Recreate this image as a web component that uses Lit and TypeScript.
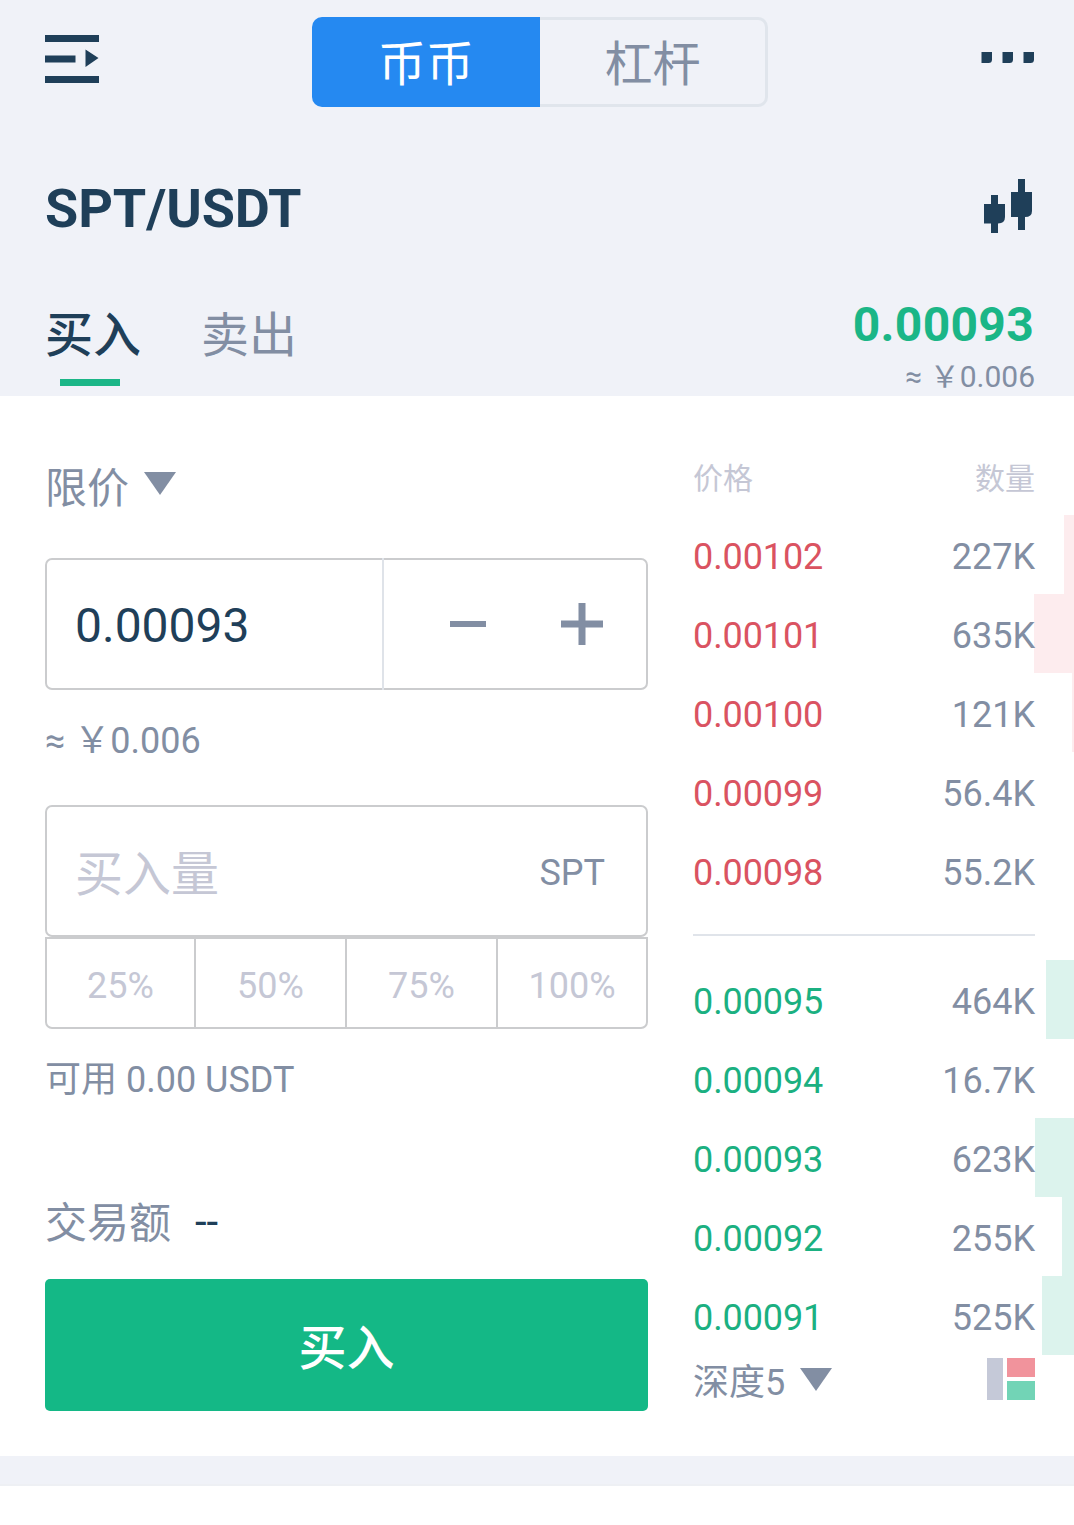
import { LitElement, html, css, svg } from "lit";
import { customElement, property } from "lit/decorators.js";
import { classMap } from "lit/directives/class-map.js";

interface Order {
  price: string;
  amount: string;
  depth: number;
}

const ASKS: Order[] = [
  { price: "0.00102", amount: "227K", depth: 10 },
  { price: "0.00101", amount: "635K", depth: 40 },
  { price: "0.00100", amount: "121K", depth: 2 },
  { price: "0.00099", amount: "56.4K", depth: 0 },
  { price: "0.00098", amount: "55.2K", depth: 0 },
];

const BIDS: Order[] = [
  { price: "0.00095", amount: "464K", depth: 28 },
  { price: "0.00094", amount: "16.7K", depth: 0 },
  { price: "0.00093", amount: "623K", depth: 39 },
  { price: "0.00092", amount: "255K", depth: 12 },
  { price: "0.00091", amount: "525K", depth: 32 },
];

const caret = svg`<path d="M0 0H32L16 23Z" fill="#828ea3"/>`;

@customElement("trade-header")
export class TradeHeader extends LitElement {
  static styles = css`
    :host {
      display: block;
      height: 396px;
      background: #f0f2f8;
      color: #1f3f59;
    }
    svg {
      display: block;
    }
    .bar {
      display: flex;
      height: 90px;
      padding: 17px 39px 0 45px;
    }
    .menu {
      margin-top: 18px;
    }
    .more {
      margin: 35px 0 0 auto;
    }
    .switch {
      display: flex;
      width: 456px;
      margin-left: 213px;
      font-size: 48px;
      line-height: 90px;
      text-align: center;
    }
    .seg {
      box-sizing: border-box;
      width: 228px;
      height: 90px;
      padding-top: 3px;
    }
    .seg.on {
      background: #2589f1;
      color: #fff;
      border-radius: 10px 0 0 10px;
    }
    .seg.off {
      border: 3px solid #e0e5ec;
      border-left: 0;
      border-radius: 0 10px 10px 0;
      color: #828ea3;
      line-height: 84px;
    }
    .pair {
      display: flex;
      justify-content: space-between;
      padding: 72px 42px 0 45px;
      height: 60px;
    }
    .name {
      margin: 0;
      font-size: 54px;
      font-weight: 700;
      line-height: 60px;
      letter-spacing: -0.1px;
    }
    .side {
      display: flex;
      justify-content: space-between;
      padding: 61px 39px 0 45px;
    }
    .tabs {
      display: flex;
      gap: 60px;
      padding-top: 6px;
      font-size: 48px;
      line-height: 60px;
    }
    .tab {
      width: 96px;
      color: #828ea3;
    }
    .tab.on {
      color: #1f3f59;
      font-weight: 500;
    }
    .tab.on::after {
      content: "";
      display: block;
      width: 60px;
      height: 7px;
      margin: 13px 0 0 15px;
      background: #1bb687;
    }
    .last {
      text-align: right;
    }
    .price {
      color: #1bb687;
      font-size: 48px;
      font-weight: 700;
      line-height: 50px;
      letter-spacing: 0.3px;
      padding-right: 1px;
    }
    .cny {
      margin-top: 7px;
      color: #828ea3;
      font-size: 30px;
      line-height: 40px;
    }
  `;

  render() {
    return html`
      <div class="bar">
        <svg class="menu" width="54" height="48" viewBox="0 0 54 48" fill="#1f3f59">
          <path d="M0 0H54V7H0ZM0 20.500H30.500V27.500H0ZM40.500 14.500L53.500 23L40.500 32ZM0 41H54V48H0Z" />
        </svg>
        <div class="switch">
          <div class="seg on">币币</div>
          <div class="seg off">杠杆</div>
        </div>
        <svg class="more" width="54" height="12" viewBox="0 0 54 12" fill="#1f3f59">
          <path d="M.5 0H11V7.500Q11 11 7.500 11H.5ZM21.500 0H32V7.500Q32 11 28.500 11H21.500ZM42.500 0H53V7.500Q53 11 49.500 11H42.500Z" />
        </svg>
      </div>
      <div class="pair">
        <h1 class="name">SPT/USDT</h1>
        <svg class="candles" width="48" height="54" viewBox="0 0 48 54" fill="#1f3f59">
          <path d="M7 16H14V25H21V38Q21 44.500 14 44.500V54H7V44.500H0V25H7ZM34 0H41V13H48V32Q48 38 41 38V51H34V38H27V13H34Z" />
        </svg>
      </div>
      <div class="side">
        <div class="tabs">
          <div class="tab on">买入</div>
          <div class="tab">卖出</div>
        </div>
        <div class="last">
          <div class="price">0.00093</div>
          <div class="cny">≈ ￥0.006</div>
        </div>
      </div>
    `;
  }
}

@customElement("order-form")
export class OrderForm extends LitElement {
  static styles = css`
    :host {
      display: block;
      width: 603px;
      padding-top: 69px;
      color: #828ea3;
      font-size: 36px;
    }
    .type,
    .total {
      display: flex;
      height: 48px;
      line-height: 48px;
      font-size: 42px;
    }
    .type {
      gap: 15px;
    }
    .type svg {
      display: block;
      margin-top: 7px;
    }
    .field {
      box-sizing: border-box;
      display: flex;
      height: 132px;
      border: 2px solid #cbccce;
      border-radius: 7px;
    }
    .price {
      margin-top: 45px;
    }
    .value {
      width: 335px;
      padding: 2px 0 0 28px;
      box-sizing: border-box;
      color: #1f3f59;
      font-size: 48px;
      line-height: 128px;
    }
    .steps {
      display: flex;
      flex: 1;
      align-items: flex-start;
      gap: 75px;
      margin: -2px 0;
      padding: 45px 0 0 66px;
      border-left: 2px solid #dfe3e9;
    }
    .note {
      height: 48px;
      line-height: 48px;
    }
    .approx {
      margin: 27px 0 40px;
    }
    .amount {
      justify-content: space-between;
      padding: 0 41px 0 28px;
      line-height: 129px;
    }
    .hint {
      padding-top: 3px;
      color: #c5c7d5;
      font-size: 48px;
    }
    .unit {
      padding-top: 2px;
    }
    .parts {
      box-sizing: border-box;
      display: grid;
      grid-template-columns: 149px 151px 151px 1fr;
      grid-template-rows: 88px;
      height: 92px;
      border: 2px solid #cbccce;
      border-radius: 0 0 7px 7px;
      color: #c5c7d5;
      line-height: 94px;
      text-align: center;
    }
    .part:not(:last-child) {
      border-right: 2px solid #cbccce;
    }
    .free {
      margin-top: 27px;
    }
    .total {
      gap: 24px;
      margin-top: 95px;
    }
    .label {
      padding-top: 1px;
    }
    .sum {
      color: #1f3f59;
      line-height: 46px;
    }
    .buy {
      display: block;
      width: 603px;
      height: 132px;
      margin-top: 32px;
      padding: 7px 0 0;
      box-sizing: border-box;
      border: 0;
      border-radius: 5px;
      background: #14b886;
      color: #fff;
      font: 500 48px/125px Roboto, "Noto Sans CJK SC", sans-serif;
    }
  `;

  render() {
    return html`
      <div class="type">
        <span>限价</span>
        <svg width="32" height="23" viewBox="0 0 32 23">${caret}</svg>
      </div>
      <div class="field price">
        <div class="value">0.00093</div>
        <div class="steps">
          <svg width="36" height="42" viewBox="0 0 36 42" fill="#828ea3"><path d="M0 18H36V24H0Z" /></svg>
          <svg width="42" height="42" viewBox="0 0 42 42" fill="#828ea3">
            <path d="M17.500 0H24.500V17.500H42V24.500H24.500V42H17.500V24.500H0V17.500H17.500Z" />
          </svg>
        </div>
      </div>
      <div class="note approx">≈ ￥0.006</div>
      <div class="field amount">
        <span class="hint">买入量</span>
        <span class="unit">SPT</span>
      </div>
      <div class="parts">
        ${["25%", "50%", "75%", "100%"].map((p) => html`<div class="part">${p}</div>`)}
      </div>
      <div class="note free">可用 0.00 USDT</div>
      <div class="total"><span class="label">交易额</span><span class="sum">--</span></div>
      <button class="buy">买入</button>
    `;
  }
}

@customElement("order-rows")
export class OrderRows extends LitElement {
  @property({ attribute: false }) orders: Order[] = [];
  @property() kind = "ask";

  static styles = css`
    :host {
      display: block;
      font-size: 36px;
    }
    .row {
      position: relative;
      display: flex;
      justify-content: space-between;
      height: 74px;
      padding: 5px 39px 0 0;
      line-height: 75px;
      color: #828ea3;
    }
    .depth {
      position: absolute;
      top: 0;
      right: 0;
      height: 79px;
      background: #fdecee;
    }
    .price {
      color: #da5361;
      letter-spacing: -0.1px;
    }
    .amount {
      position: relative;
    }
    .bid .depth {
      background: #dcf3ed;
    }
    .bid .price {
      color: #1bb081;
    }
  `;

  render() {
    return this.orders.map(
      (o) => html`
        <div class=${classMap({ row: true, bid: this.kind === "bid" })}>
          <div class="depth" style="width:${o.depth}px"></div>
          <span class="price">${o.price}</span>
          <span class="amount">${o.amount}</span>
        </div>
      `
    );
  }
}

@customElement("order-book")
export class OrderBook extends LitElement {
  static styles = css`
    :host {
      display: block;
      flex: 1;
      padding-top: 59px;
      color: #828ea3;
    }
    .head {
      display: flex;
      justify-content: space-between;
      height: 48px;
      margin: 0 39px 12px 0;
      color: #c5c7d5;
      font-size: 30px;
      line-height: 48px;
    }
    .line {
      height: 2px;
      margin: 24px 39px 24px 0;
      background: #e0e4ea;
    }
    .foot {
      display: flex;
      align-items: center;
      height: 54px;
      margin-right: 39px;
      font-size: 36px;
      line-height: 54px;
    }
    .label {
      padding-top: 1px;
    }
    .caret {
      margin: 0 auto 6px 15px;
    }
    .layout {
      margin-bottom: 6px;
    }
  `;

  render() {
    return html`
      <div class="head"><span>价格</span><span>数量</span></div>
      <order-rows kind="ask" .orders=${ASKS}></order-rows>
      <div class="line"></div>
      <order-rows kind="bid" .orders=${BIDS}></order-rows>
      <div class="foot">
        <span class="label">深度5</span>
        <svg class="caret" width="32" height="23" viewBox="0 0 32 23">${caret}</svg>
        <svg class="layout" width="48" height="42" viewBox="0 0 48 42">
          <path d="M0 0H16V42H0Z" fill="#c5c9d8" />
          <path d="M20 0H48V19H20Z" fill="#f1939c" />
          <path d="M20 23H48V42H20Z" fill="#72d4b6" />
        </svg>
      </div>
    `;
  }
}

@customElement("app-root")
export class AppRoot extends LitElement {
  static styles = css`
    :host {
      display: block;
      height: 1525px;
      overflow: hidden;
      background: #fff;
      font-family: Roboto, "Noto Sans CJK SC", sans-serif;
    }
    .body {
      display: flex;
      gap: 45px;
      height: 1060px;
      padding-left: 45px;
    }
    .strip {
      box-sizing: border-box;
      height: 30px;
      background: #f0f2f8;
      border-bottom: 2px solid #eef0f4;
    }
  `;

  render() {
    return html`
      <trade-header></trade-header>
      <div class="body">
        <order-form></order-form>
        <order-book></order-book>
      </div>
      <div class="strip"></div>
    `;
  }
}
